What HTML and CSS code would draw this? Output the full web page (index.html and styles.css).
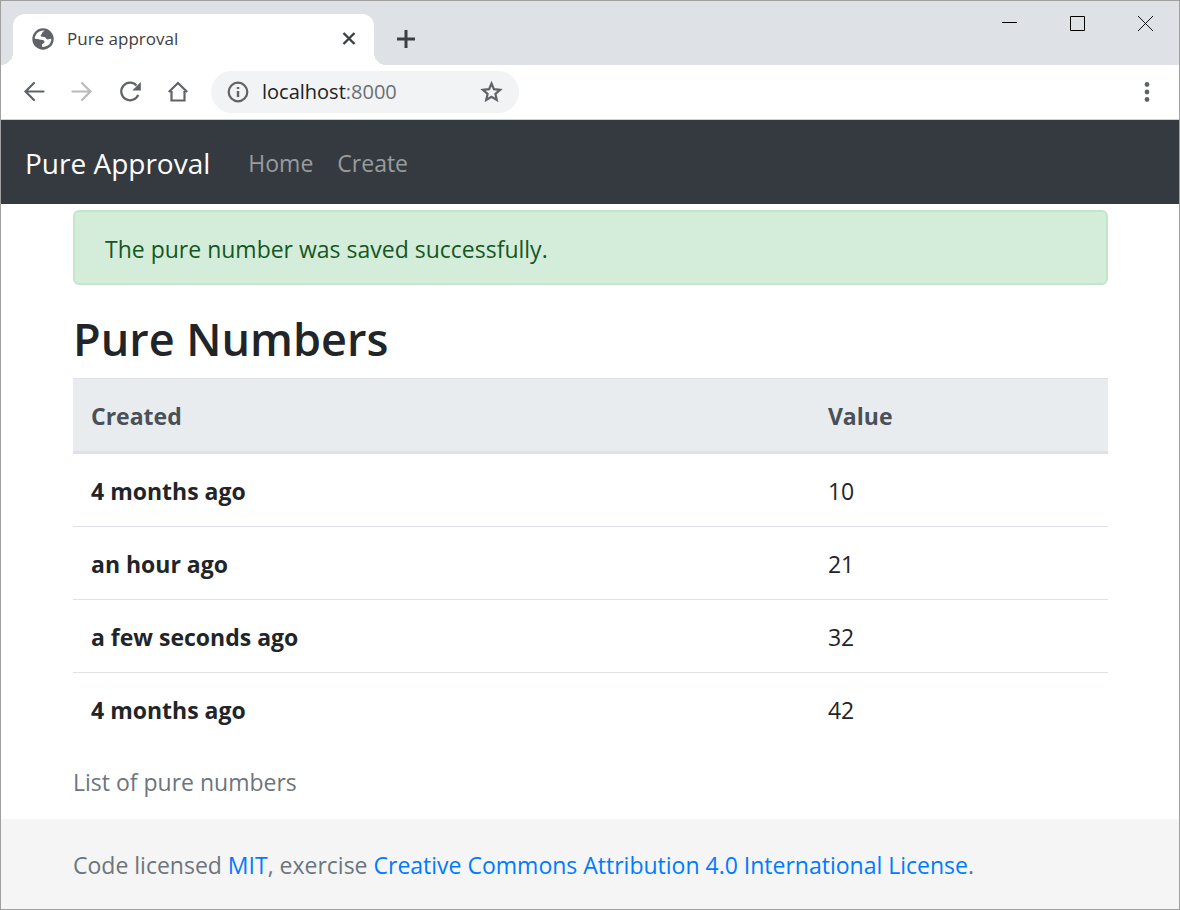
FILE: index.html
```html
<!DOCTYPE html>
<html lang="en">
<head>
<meta charset="utf-8">
<title>Pure approval</title>
<link rel="stylesheet" href="styles.css">
</head>
<body>
<div class="window">
  <div class="tabstrip">
    <div class="tab">
      <svg class="favicon" viewBox="0 0 22 22" aria-hidden="true">
        <circle cx="11" cy="11" r="10.7" fill="#5f6368"/>
        <path fill="#fff" d="M12.6 2.6c-.6 1-1.700 1.100-2.200 1.800-.5.800-.2 1.500-1.100 2.100-1 .6-.8 1.400-.1 1.900.800.500 2.600.200 3.700.9 1.200.700 1.200 2 2.600 2.100 1.500.1 2.600-.700 3.900-.5-.1 2.700-1.500 5.200-3.700 6.700-1.800 1.100-3.900 1.500-5.700 1.200l-.1-2.200c.1-1.200 2.600-1.400 2.600-2.700 0-1.500-1.500-2.100-3-2.200-1.700-.1-2.500-.7-3.900-.8l-2.900-.1c.1-4.700 4.400-8.900 9.900-8.200z"/>
      </svg>
      <span class="tab-title">Pure approval</span>
      <button class="icon-btn tab-close" aria-label="Close tab"><svg width="14" height="14" viewBox="0 0 14 14"><path d="M1.500 1l11 11M12.500 1l-11 11" stroke="#3c4043" stroke-width="2.400"/></svg></button>
    </div>
    <button class="icon-btn new-tab" aria-label="New tab"><svg width="18" height="18" viewBox="0 0 18 18"><path d="M9 .5v17M.5 9h17" stroke="#3c4043" stroke-width="3" stroke-linecap="round"/></svg></button>
    <div class="window-controls">
      <button class="icon-btn" aria-label="Minimize"><svg width="15" height="15" viewBox="0 0 15 15"><path d="M0 6.500h15" stroke="#000"/></svg></button>
      <button class="icon-btn" aria-label="Maximize"><svg width="15" height="15" viewBox="0 0 15 15"><path d="M.5.5h14v14H.5z" fill="none" stroke="#000"/></svg></button>
      <button class="icon-btn" aria-label="Close"><svg width="15" height="15" viewBox="0 0 15 15"><path d="M0 0l15 15M15 0L0 15" stroke="#111"/></svg></button>
    </div>
  </div>
  <div class="toolbar">
    <button class="icon-btn" aria-label="Back"><svg width="24" height="24" viewBox="0 0 24 24"><path d="M21.500 11.500H3.500M12 3l-8.500 8.500L12 20" fill="none" stroke="#5f6368" stroke-width="2.200" stroke-linecap="round"/></svg></button>
    <button class="icon-btn" aria-label="Forward"><svg width="24" height="24" viewBox="0 0 24 24"><path d="M2.500 11.500h18M12 3l8.500 8.500L12 20" fill="none" stroke="#bababc" stroke-width="2.200" stroke-linecap="round"/></svg></button>
    <button class="icon-btn" aria-label="Reload"><svg width="24" height="24" viewBox="0 0 24 24"><path d="M20.200 14.800A8.800 8.800 0 1 1 18.500 5.500" fill="none" stroke="#5f6368" stroke-width="2.200"/><path d="M22.800 2v8.500h-8.500z" fill="#5f6368"/></svg></button>
    <button class="icon-btn" aria-label="Home"><svg width="24" height="24" viewBox="0 0 24 24"><path d="M2.800 12L12 3l9.200 9M5.500 11v9.500h13V11" fill="none" stroke="#5f6368" stroke-width="2.200"/></svg></button>
    <div class="address">
      <svg width="22" height="22" viewBox="0 0 22 22" aria-hidden="true"><circle cx="11" cy="11" r="9.300" fill="none" stroke="#5f6368" stroke-width="2.200"/><path d="M11 10v6M11 6v2" stroke="#5f6368" stroke-width="2.400"/></svg>
      <span class="url" role="textbox" aria-label="Address">localhost<span class="port">:8000</span></span>
      <button class="icon-btn star" aria-label="Bookmark this page"><svg width="24" height="24" viewBox="0 0 24 24"><path d="M11.500 3.500l2.400 5.700 6.200.600-4.700 4.100 1.400 6.100-5.300-3.200L6.200 20l1.400-6.100-4.700-4.100 6.200-.6z" fill="none" stroke="#5f6368" stroke-width="2.200"/></svg></button>
    </div>
    <button class="icon-btn menu" aria-label="Menu"><svg width="6" height="22" viewBox="0 0 6 22"><g fill="#5f6368"><circle cx="3" cy="3.500" r="2.400"/><circle cx="3" cy="11" r="2.400"/><circle cx="3" cy="18.500" r="2.400"/></g></svg></button>
  </div>

  <nav class="navbar">
    <a class="brand" href="#">Pure Approval</a>
    <a class="nav-link" href="#">Home</a>
    <a class="nav-link" href="#">Create</a>
  </nav>

  <main class="container">
    <div class="alert" role="alert">The pure number was saved successfully.</div>
    <h1 class="title">Pure Numbers</h1>
    <table class="table">
      <caption>List of pure numbers</caption>
      <thead>
        <tr><th class="col-created" scope="col">Created</th><th scope="col">Value</th></tr>
      </thead>
      <tbody>
        <tr><th scope="row">4 months ago</th><td>10</td></tr>
        <tr><th scope="row">an hour ago</th><td>21</td></tr>
        <tr><th scope="row">a few seconds ago</th><td>32</td></tr>
        <tr><th scope="row">4 months ago</th><td>42</td></tr>
      </tbody>
    </table>
  </main>

  <footer class="footer">
    Code licensed <a href="#">MIT</a>, exercise <a href="#">Creative Commons Attribution 4.0 International License</a>.
  </footer>
</div>
</body>
</html>
```
FILE: styles.css
```css
* { box-sizing: border-box; }

body {
  margin: 0;
  background: #fff;
  color: #212529;
  font-family: "Open Sans", "Noto Sans", sans-serif;
  font-size: 23px;
  line-height: 36px;
}

a { color: #007bff; text-decoration: none; }

.window {
  display: flex;
  flex-direction: column;
  min-height: 100vh;
  border: 1px solid #a0a0a0;
}

.icon-btn {
  display: flex;
  align-items: center;
  justify-content: center;
  padding: 0;
  border: 0;
  background: none;
}

/* Tab strip */
.tabstrip {
  display: flex;
  height: 64px;
  padding-left: 12px;
  background: #dee1e6;
}

.tab {
  position: relative;
  display: flex;
  align-items: center;
  width: 361px;
  margin-top: 13px;
  padding: 0 16px 2px 19px;
  border-radius: 12px 12px 0 0;
  background: #fff;
}

.tab::before,
.tab::after {
  content: "";
  position: absolute;
  bottom: 0;
  width: 12px;
  height: 12px;
}

.tab::before {
  left: -12px;
  background: radial-gradient(circle at 0 0, #dee1e6 12px, #fff 12px);
}

.tab::after {
  right: -12px;
  background: radial-gradient(circle at 100% 0, #dee1e6 12px, #fff 12px);
}

.favicon { width: 22px; height: 22px; }

.tab-title {
  flex: 1;
  margin-left: 13px;
  color: #3c4043;
  font-size: 17px;
  line-height: 24px;
}

.tab-close { width: 18px; height: 24px; }

.new-tab {
  width: 36px;
  height: 36px;
  margin: 20px 0 0 14px;
}

.window-controls {
  display: flex;
  height: 44px;
  margin-left: auto;
}

.window-controls .icon-btn { width: 68px; }

/* Toolbar */
.toolbar {
  display: flex;
  align-items: center;
  gap: 24px;
  height: 55px;
  padding: 0 29px 0 21px;
  border-bottom: 1px solid #cfd0d3;
}

.address {
  display: flex;
  align-items: center;
  width: 308px;
  height: 42px;
  margin-left: -3px;
  padding: 0 15px 0 16px;
  border-radius: 21px;
  background: #f1f3f4;
}

.url {
  flex: 1;
  margin-left: 13px;
  color: #202124;
  font-size: 20px;
  line-height: 30px;
}

.port { color: #6b6f73; }

.menu { margin-left: auto; }

/* Page */
.navbar {
  display: flex;
  align-items: center;
  height: 84px;
  padding: 2px 24px 0;
  background: #343a40;
}

.brand {
  margin-right: 26px;
  color: #fff;
  font-size: 28px;
}

.nav-link {
  padding: 0 12px;
  color: #999c9f;
}

.container {
  flex: 1;
  padding: 6px 71px 0 72px;
}

.alert {
  padding: 19px 30px 16px;
  border: 2px solid #c3e6cb;
  border-radius: 6px;
  background: #d4edda;
  color: #155724;
}

.title {
  margin: 24px 0 9px;
  font-size: 45px;
  font-weight: 600;
  line-height: 60px;
}

.table {
  width: 100%;
  border-collapse: separate;
  border-spacing: 0;
}

.table th,
.table td {
  padding: 19px 18px 17px;
  border-top: 1px solid #dee2e6;
  text-align: left;
}

.table th { font-weight: 700; }

.table thead th {
  border-bottom: 3px solid #dee2e6;
  background: #e9ecef;
  color: #495057;
}

.table tbody tr:first-child > * { border-top: 0; }

.table .col-created { width: 71.2%; }

.table caption {
  caption-side: bottom;
  padding: 19px 0;
  color: #6c757d;
  text-align: left;
}

.footer {
  padding: 28px 72px 26px;
  background: #f5f5f5;
  color: #6c757d;
}
```
